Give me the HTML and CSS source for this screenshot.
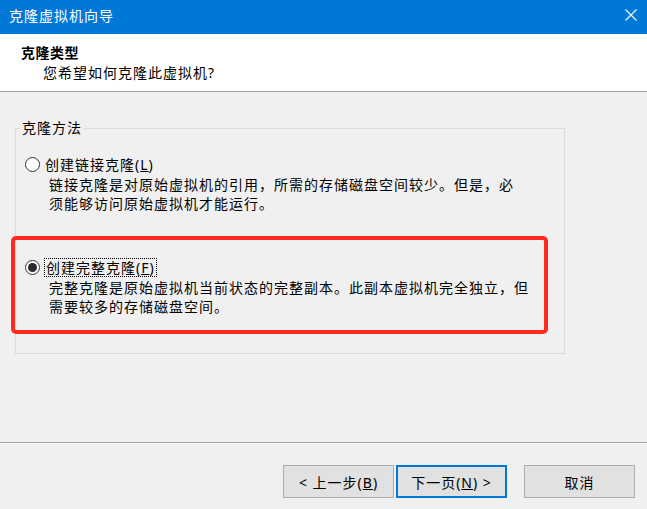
FILE: index.html
```
<!DOCTYPE html>
<html lang="zh-CN">
<head>
<meta charset="utf-8">
<title>克隆虚拟机向导</title>
<link rel="stylesheet" href="styles.css">
</head>
<body>
<div class="window">
  <div class="titlebar">
    <span class="title">克隆虚拟机向导</span>
    <svg class="close" width="12" height="12" viewBox="0 0 12 12"><path d="M0.5 0.5 L11.5 11.5 M11.5 0.5 L0.5 11.5" stroke="#fff" stroke-width="1.1" fill="none"/></svg>
  </div>
  <div class="header">
    <div class="h-title">克隆类型</div>
    <div class="h-sub">您希望如何克隆此虚拟机?</div>
  </div>
  <div class="main">
    <fieldset class="group">
      <legend>克隆方法</legend>
      <div class="option">
        <span class="radio"></span>
        <span class="label">创建链接克隆(<u>L</u>)</span>
        <p class="desc">链接克隆是对原始虚拟机的引用，所需的存储磁盘空间较少。但是，必<br>须能够访问原始虚拟机才能运行。</p>
      </div>
      <div class="option option-second">
        <span class="radio checked"></span>
        <span class="label focused">创建完整克隆(<u>F</u>)</span>
        <p class="desc">完整克隆是原始虚拟机当前状态的完整副本。此副本虚拟机完全独立，但<br>需要较多的存储磁盘空间。</p>
      </div>
    </fieldset>
  </div>
  <div class="footer">
    <button class="btn btn-back">&lt; 上一步(<u>B</u>)</button>
    <button class="btn btn-default">下一页(<u>N</u>) &gt;</button>
    <button class="btn btn-cancel">取消</button>
  </div>
  <div class="highlight"></div>
</div>
</body>
</html>
```
FILE: styles.css
```
* { box-sizing: border-box; }
html, body { margin: 0; padding: 0; }
body {
  width: 647px;
  height: 509px;
  overflow: hidden;
  background: #f0f0f0;
  font-family: "Noto Sans", "Noto Sans CJK SC", sans-serif;
  font-size: 14px;
  letter-spacing: 1px;
  color: #000;
}
.window {
  position: relative;
  width: 647px;
  height: 509px;
  display: flex;
  flex-direction: column;
}
.titlebar {
  height: 34px;
  flex: none;
  background: #0078d7;
  color: #fff;
  display: flex;
  align-items: flex-start;
  padding-left: 9px;
  padding-right: 10px;
}
.title {
  line-height: 32px;
  font-size: 14px;
}
.close {
  margin-left: auto;
  margin-top: 9px;
}
.header {
  height: 58px;
  flex: none;
  background: #fff;
  border-bottom: 1px solid #a0a0a0;
  padding: 10px 0 0 21px;
}
.h-title {
  font-weight: bold;
  line-height: 18px;
  letter-spacing: 0.5px;
}
.h-sub {
  line-height: 18px;
  margin-top: 2px;
  padding-left: 22px;
}
.main {
  flex: 1;
  padding: 27px 0 0 15px;
}
.group {
  margin: 0;
  width: 550px;
  border: 1px solid #dcdcdc;
  padding: 18px 0 37px 9px;
  min-width: 0;
}
.group legend {
  margin-left: -5px;
  padding: 0 2px;
  line-height: 18px;
}
.option {
  display: grid;
  grid-template-columns: 15px auto;
  column-gap: 4px;
  align-items: center;
  justify-content: start;
}
.option-second {
  margin-top: 45px;
}
.radio {
  width: 15px;
  height: 15px;
  border: 1px solid #333;
  border-radius: 50%;
  background: #fff;
  display: flex;
  align-items: center;
  justify-content: center;
}
.radio.checked::after {
  content: "";
  width: 9px;
  height: 9px;
  border-radius: 50%;
  background: #2b2b2b;
}
.label {
  line-height: 17px;
  border: 1px solid transparent;
  padding: 0 1px 0 0;
  justify-self: start;
}
.label.focused {
  border: 1px dotted #000;
  padding-left: 1px;
}
.desc {
  grid-column: 2;
  margin: 2px 0 0 5px;
  line-height: 18.5px;
  white-space: nowrap;
}
.footer {
  height: 67px;
  flex: none;
  border-top: 1px solid #a0a0a0;
  box-shadow: inset 0 1px 0 #fff;
  display: flex;
  justify-content: flex-end;
  align-items: flex-start;
  padding: 22px 12px 0 0;
}
.btn {
  width: 111px;
  height: 33px;
  background: #e1e1e1;
  border: 1px solid #adadad;
  font: inherit;
  letter-spacing: 1px;
  color: #000;
  padding: 0;
  margin: 0;
}
.btn-default {
  border: 2px solid #0078d7;
  margin-left: 2px;
}
.btn-cancel {
  margin-left: 17px;
}
.highlight {
  position: absolute;
  left: 11px;
  top: 236px;
  width: 537px;
  height: 98px;
  border: 4px solid #ff2a20;
  border-radius: 5px;
  pointer-events: none;
}
```
